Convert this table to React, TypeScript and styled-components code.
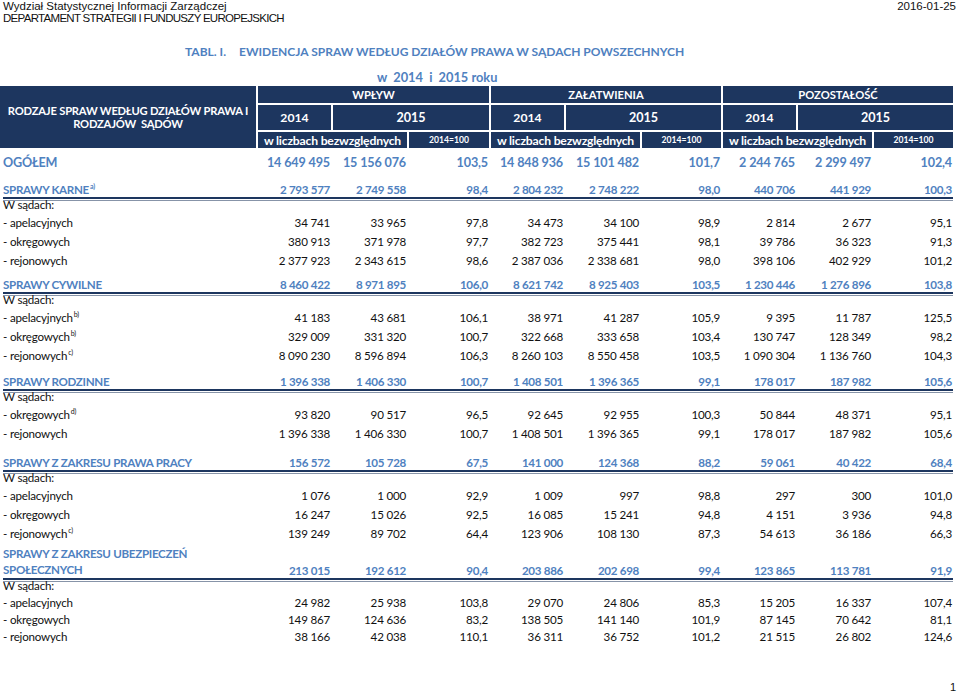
import React from "react";
import styled, { createGlobalStyle } from "styled-components";

const COLS = "253px 73px 74px 80px 73px 74px 79px 73px 74px 79px";
const HCOLS = "256px 73px 74px 80px 73px 74px 79px 73px 74px 79px";
const NAVY = "#1d365f";
const BLUE = "#4f81c0";

const Global = createGlobalStyle`
  html, body { margin: 0; padding: 0; background: #fff; }
  body { font-family: Lato, "Open Sans", sans-serif; color: #111; width: 960px; height: 694px; overflow: hidden; }
`;

const Page = styled.div`
  width: 960px;
  display: flex;
  flex-direction: column;
`;

const TopBar = styled.div`
  display: flex;
  justify-content: space-between;
  padding: 0 4px 0 3px;
  height: 24px;
  font-family: "Liberation Sans Narrow", "Arial Narrow", "Liberation Sans", Arial, sans-serif;
  font-size: 11.5px;
  line-height: 12px;
  color: #111;
`;

const Dept = styled.div`
  letter-spacing: -0.7px;
`;

const Title = styled.div`
  margin-top: 19px;
  padding-left: 185px;
  display: flex;
  gap: 13px;
  font-weight: 700;
  font-size: 12px;
  line-height: 18px;
  color: ${BLUE};
  white-space: pre;
`;

const Subtitle = styled.div`
  margin-top: 8px;
  padding-left: 377px;
  font-weight: 700;
  font-size: 12.8px;
  line-height: 16px;
  color: ${BLUE};
  white-space: pre;
`;

const HeadGrid = styled.div`
  margin-top: 1px;
  display: grid;
  grid-template-columns: ${HCOLS};
  grid-template-rows: 17px 25px 16px;
  gap: 2px;
  width: 953px;
`;

const HeadCell = styled.div<{ $col: string; $row: string; $size: number; $ls?: number }>`
  grid-column: ${(p) => p.$col};
  grid-row: ${(p) => p.$row};
  background: ${NAVY};
  color: #fff;
  font-weight: 700;
  font-size: ${(p) => p.$size}px;
  line-height: 13px;
  display: flex;
  align-items: center;
  justify-content: center;
  text-align: center;
  white-space: pre;
  letter-spacing: ${(p) => p.$ls ?? 0}px;
`;

const Row = styled.div<{ $h: number }>`
  display: grid;
  grid-template-columns: ${COLS};
  column-gap: 2px;
  margin-left: 3px;
  width: 950px;
  height: ${(p) => p.$h}px;
  align-items: center;
  font-size: 11.6px;
  line-height: 15px;
  letter-spacing: -0.2px;
  color: #111;
`;

const TotalRow = styled(Row)`
  font-weight: 700;
  font-size: 12.6px;
  color: ${BLUE};
  letter-spacing: -0.15px;
`;

const SectionRow = styled(Row)`
  align-items: end;
  font-weight: 700;
  color: ${BLUE};
  border-bottom: 2px solid ${NAVY};
  box-shadow: 0 1px 0 #fff, 0 2px 0 #8794a8;
  line-height: 15px;
  letter-spacing: -0.3px;
`;

const CourtsRow = styled(Row)`
  height: 14px;
  align-items: start;
  line-height: 12px;
`;

const Label = styled.div<{ $lh?: number }>`
  white-space: nowrap;
  line-height: ${(p) => (p.$lh ? `${p.$lh}px` : "inherit")};
`;

const Num = styled.div`
  text-align: right;
  padding-right: 1px;
  white-space: nowrap;
`;

const Sup = styled.sup`
  font-size: 7px;
  line-height: 0;
  vertical-align: 5px;
  margin-left: 1px;
`;

const Footer = styled.div`
  margin-top: 35px;
  width: 956px;
  text-align: right;
  font-family: "Liberation Sans", Arial, sans-serif;
  font-size: 11px;
  line-height: 14px;
`;

type Sub = { label: string; sup?: string; vals: string[] };
type Section = { title: React.ReactNode; sup?: string; h: number; rowH: number; lh?: number; vals: string[]; rows: Sub[] };

const total = ["14 649 495", "15 156 076", "103,5", "14 848 936", "15 101 482", "101,7", "2 244 765", "2 299 497", "102,4"];

const sections: Section[] = [
  {
    title: "SPRAWY  KARNE",
    sup: "a)",
    h: 21,
    rowH: 19,
    vals: ["2 793 577", "2 749 558", "98,4", "2 804 232", "2 748 222", "98,0", "440 706", "441 929", "100,3"],
    rows: [
      { label: "- apelacyjnych", vals: ["34 741", "33 965", "97,8", "34 473", "34 100", "98,9", "2 814", "2 677", "95,1"] },
      { label: "- okręgowych", vals: ["380 913", "371 978", "97,7", "382 723", "375 441", "98,1", "39 786", "36 323", "91,3"] },
      { label: "- rejonowych", vals: ["2 377 923", "2 343 615", "98,6", "2 387 036", "2 338 681", "98,0", "398 106", "402 929", "101,2"] },
    ],
  },
  {
    title: "SPRAWY CYWILNE",
    h: 22,
    rowH: 19,
    vals: ["8 460 422", "8 971 895", "106,0", "8 621 742", "8 925 403", "103,5", "1 230 446", "1 276 896", "103,8"],
    rows: [
      { label: "- apelacyjnych", sup: "b)", vals: ["41 183", "43 681", "106,1", "38 971", "41 287", "105,9", "9 395", "11 787", "125,5"] },
      { label: "- okręgowych", sup: "b)", vals: ["329 009", "331 320", "100,7", "322 668", "333 658", "103,4", "130 747", "128 349", "98,2"] },
      { label: "- rejonowych", sup: "c)", vals: ["8 090 230", "8 596 894", "106,3", "8 260 103", "8 550 458", "103,5", "1 090 304", "1 136 760", "104,3"] },
    ],
  },
  {
    title: "SPRAWY RODZINNE",
    h: 24,
    rowH: 19,
    vals: ["1 396 338", "1 406 330", "100,7", "1 408 501", "1 396 365", "99,1", "178 017", "187 982", "105,6"],
    rows: [
      { label: "- okręgowych", sup: "d)", vals: ["93 820", "90 517", "96,5", "92 645", "92 955", "100,3", "50 844", "48 371", "95,1"] },
      { label: "- rejonowych", vals: ["1 396 338", "1 406 330", "100,7", "1 408 501", "1 396 365", "99,1", "178 017", "187 982", "105,6"] },
    ],
  },
  {
    title: "SPRAWY Z ZAKRESU PRAWA PRACY",
    h: 27,
    rowH: 19,
    vals: ["156 572", "105 728", "67,5", "141 000", "124 368", "88,2", "59 061", "40 422", "68,4"],
    rows: [
      { label: "- apelacyjnych", vals: ["1 076", "1 000", "92,9", "1 009", "997", "98,8", "297", "300", "101,0"] },
      { label: "- okręgowych", vals: ["16 247", "15 026", "92,5", "16 085", "15 241", "94,8", "4 151", "3 936", "94,8"] },
      { label: "- rejonowych", sup: "c)", vals: ["139 249", "89 702", "64,4", "123 906", "108 130", "87,3", "54 613", "36 186", "66,3"] },
    ],
  },
  {
    title: (
      <>
        SPRAWY Z ZAKRESU UBEZPIECZEŃ
        <br />
        SPOŁECZNYCH
      </>
    ),
    h: 35,
    rowH: 17,
    lh: 16,
    vals: ["213 015", "192 612", "90,4", "203 886", "202 698", "99,4", "123 865", "113 781", "91,9"],
    rows: [
      { label: "- apelacyjnych", vals: ["24 982", "25 938", "103,8", "29 070", "24 806", "85,3", "15 205", "16 337", "107,4"] },
      { label: "- okręgowych", vals: ["149 867", "124 636", "83,2", "138 505", "141 140", "101,9", "87 145", "70 642", "81,1"] },
      { label: "- rejonowych", vals: ["38 166", "42 038", "110,1", "36 311", "36 752", "101,2", "21 515", "26 802", "124,6"] },
    ],
  },
];

const Nums = ({ vals }: { vals: string[] }) => (
  <>
    {vals.map((v, i) => (
      <Num key={i}>{v}</Num>
    ))}
  </>
);

export default function App() {
  return (
    <Page>
      <Global />
      <TopBar>
        <div>
          <div>Wydział Statystycznej Informacji Zarządczej</div>
          <Dept>DEPARTAMENT STRATEGII I FUNDUSZY EUROPEJSKICH</Dept>
        </div>
        <div>2016-01-25</div>
      </TopBar>
      <Title>
        <span>TABL. I.</span>
        <span>EWIDENCJA SPRAW WEDŁUG DZIAŁÓW PRAWA W SĄDACH POWSZECHNYCH</span>
      </Title>
      <Subtitle>{"w  2014  i  2015 roku"}</Subtitle>
      <HeadGrid>
        <HeadCell $col="1" $row="1 / 4" $size={11.2} $ls={-0.2}>
          {"RODZAJE SPRAW WEDŁUG DZIAŁÓW PRAWA I\nRODZAJÓW  SĄDÓW"}
        </HeadCell>
        <HeadCell $col="2 / 5" $row="1" $size={11.2}>WPŁYW</HeadCell>
        <HeadCell $col="5 / 8" $row="1" $size={11.2}>ZAŁATWIENIA</HeadCell>
        <HeadCell $col="8 / 11" $row="1" $size={11.2}>POZOSTAŁOŚĆ</HeadCell>
        {[2, 5, 8].map((c) => (
          <React.Fragment key={c}>
            <HeadCell $col={`${c}`} $row="2" $size={12.2}>2014</HeadCell>
            <HeadCell $col={`${c + 1} / ${c + 3}`} $row="2" $size={12.6}>2015</HeadCell>
            <HeadCell $col={`${c} / ${c + 2}`} $row="3" $size={12.2} $ls={-0.2}>w liczbach bezwzględnych</HeadCell>
            <HeadCell $col={`${c + 2}`} $row="3" $size={8.6}>2014=100</HeadCell>
          </React.Fragment>
        ))}
      </HeadGrid>
      <TotalRow $h={28}>
        <Label>OGÓŁEM</Label>
        <Nums vals={total} />
      </TotalRow>
      {sections.map((s, si) => (
        <React.Fragment key={si}>
          <SectionRow $h={s.h}>
            <Label $lh={s.lh}>
              {s.title}
              {s.sup && <Sup>{s.sup}</Sup>}
            </Label>
            <Nums vals={s.vals} />
          </SectionRow>
          <CourtsRow $h={14}>
            <Label>W sądach:</Label>
          </CourtsRow>
          {s.rows.map((r, ri) => (
            <Row $h={s.rowH} key={ri}>
              <Label>
                {r.label}
                {r.sup && <Sup>{r.sup}</Sup>}
              </Label>
              <Nums vals={r.vals} />
            </Row>
          ))}
        </React.Fragment>
      ))}
      <Footer>1</Footer>
    </Page>
  );
}
